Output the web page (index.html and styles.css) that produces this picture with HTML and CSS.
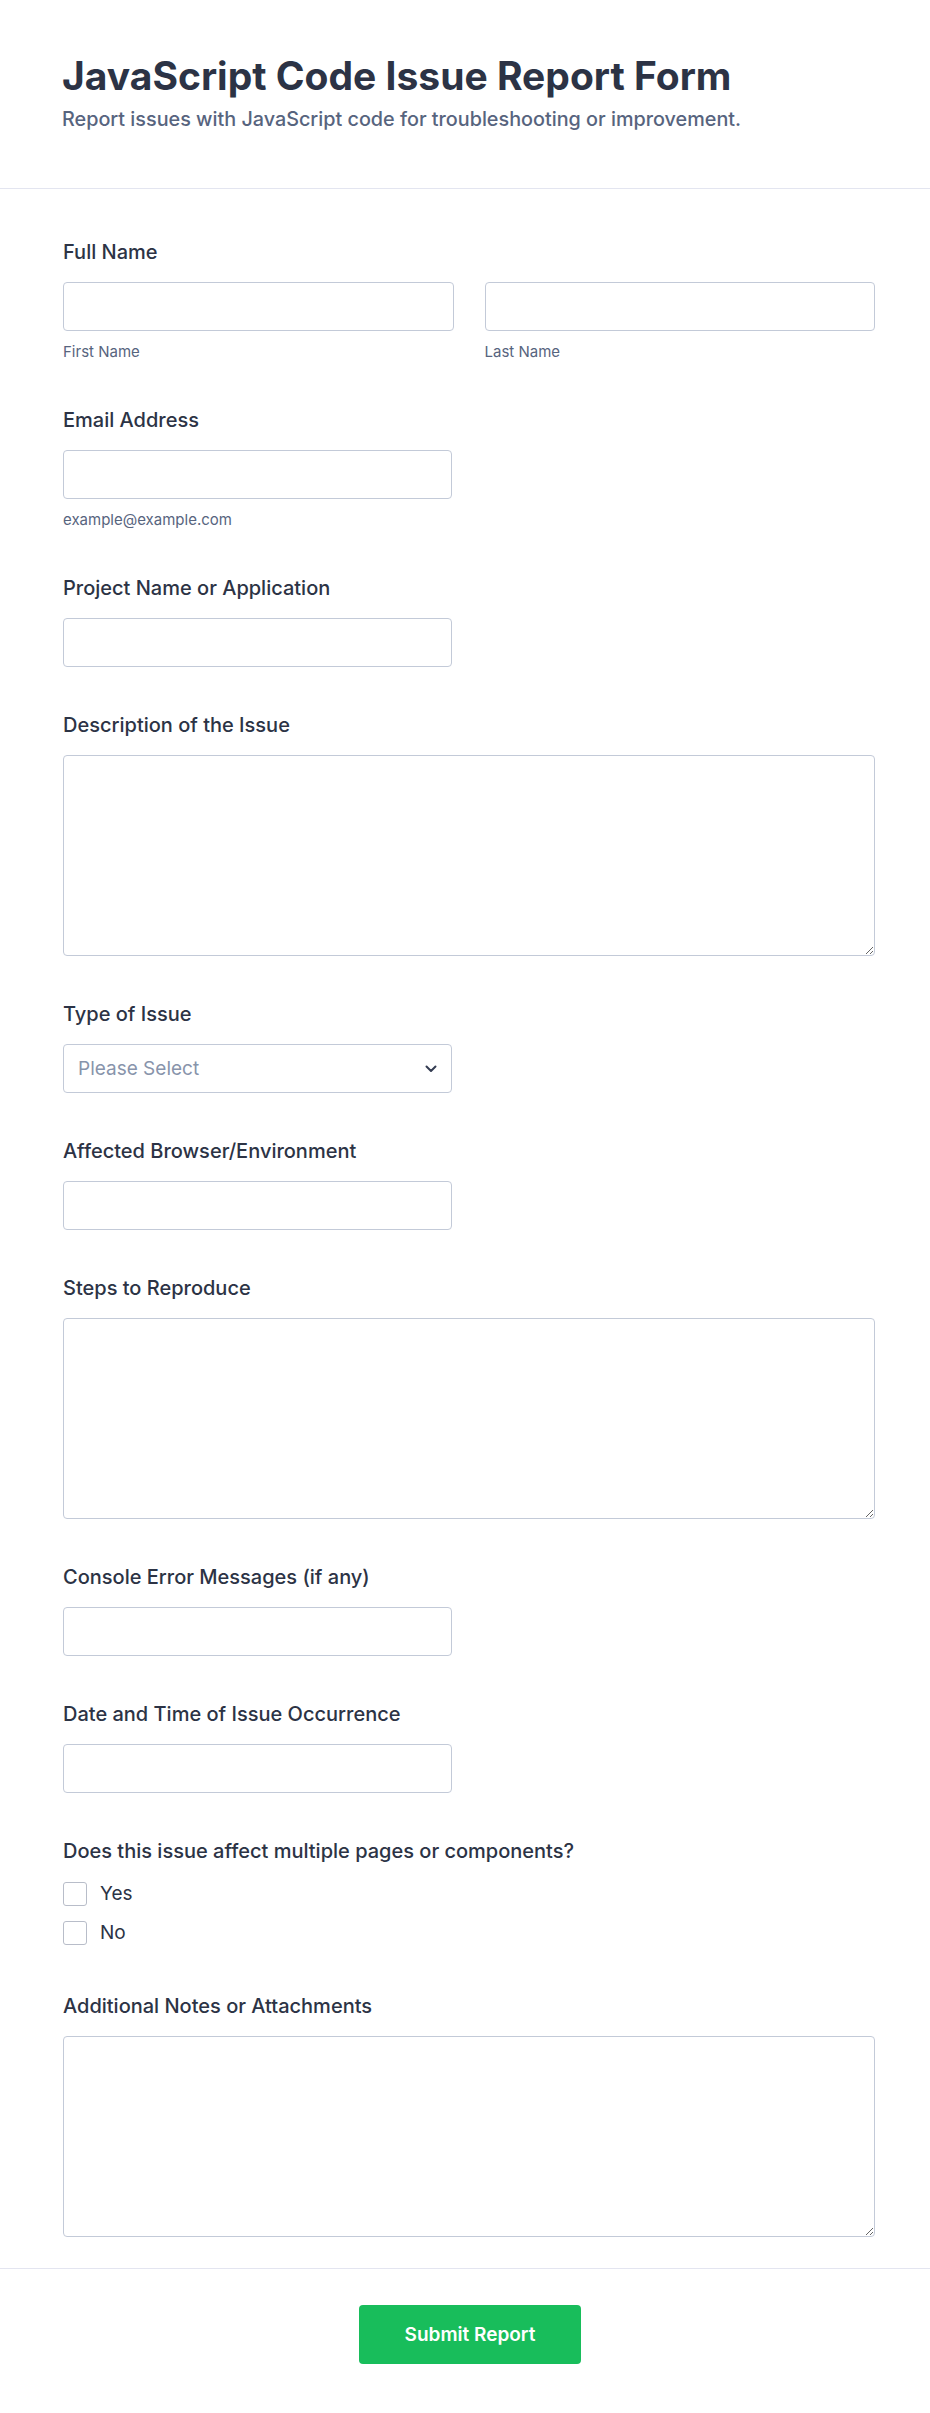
FILE: index.html
```html
<!DOCTYPE html>
<html lang="en">
<head>
    <meta charset="UTF-8">
    <meta name="viewport" content="width=device-width, initial-scale=1.0">
    <title>JavaScript Code Issue Report Form</title>
    <link rel="stylesheet" href="styles.css">
</head>
<body>
    <form class="report-form" onsubmit="return false;">
        <header class="form-header">
            <h1 class="form-title">JavaScript Code Issue Report Form</h1>
            <p class="form-subtitle">Report issues with JavaScript code for troubleshooting or improvement.</p>
        </header>

        <div class="form-body">
            <div class="field">
                <label class="field-label">Full Name</label>
                <div class="name-row">
                    <div>
                        <input type="text" class="text-input" id="first_name">
                        <span class="sublabel">First Name</span>
                    </div>
                    <div>
                        <input type="text" class="text-input" id="last_name">
                        <span class="sublabel">Last Name</span>
                    </div>
                </div>
            </div>

            <div class="field">
                <label class="field-label" for="email">Email Address</label>
                <input type="email" class="text-input half" id="email">
                <span class="sublabel">example@example.com</span>
            </div>

            <div class="field">
                <label class="field-label" for="project">Project Name or Application</label>
                <input type="text" class="text-input half" id="project">
            </div>

            <div class="field">
                <label class="field-label" for="description">Description of the Issue</label>
                <textarea class="text-area" id="description"></textarea>
            </div>

            <div class="field">
                <label class="field-label" for="issue_type">Type of Issue</label>
                <div class="select-wrap half">
                    <select class="select-input" id="issue_type">
                        <option value="">Please Select</option>
                        <option>Syntax Error</option>
                        <option>Runtime Error</option>
                        <option>Logic Error</option>
                        <option>Performance</option>
                        <option>Other</option>
                    </select>
                    <svg class="select-arrow" width="12" height="8" viewBox="0 0 12 8">
                        <path d="M1.5 1.5 L6 6 L10.5 1.5" fill="none" stroke="#343c52" stroke-width="2" stroke-linecap="round" stroke-linejoin="round"/>
                    </svg>
                </div>
            </div>

            <div class="field">
                <label class="field-label" for="browser">Affected Browser/Environment</label>
                <input type="text" class="text-input half" id="browser">
            </div>

            <div class="field">
                <label class="field-label" for="steps">Steps to Reproduce</label>
                <textarea class="text-area" id="steps"></textarea>
            </div>

            <div class="field">
                <label class="field-label" for="console">Console Error Messages (if any)</label>
                <input type="text" class="text-input half" id="console">
            </div>

            <div class="field">
                <label class="field-label" for="occurred">Date and Time of Issue Occurrence</label>
                <input type="text" class="text-input half" id="occurred">
            </div>

            <div class="field field-checks">
                <label class="field-label">Does this issue affect multiple pages or components?</label>
                <div class="check-list">
                    <label class="check-row">
                        <input type="checkbox" class="check-box" name="multiple" value="Yes">
                        <span>Yes</span>
                    </label>
                    <label class="check-row">
                        <input type="checkbox" class="check-box" name="multiple" value="No">
                        <span>No</span>
                    </label>
                </div>
            </div>

            <div class="field">
                <label class="field-label" for="notes">Additional Notes or Attachments</label>
                <textarea class="text-area" id="notes"></textarea>
            </div>
        </div>

        <div class="form-footer">
            <button type="submit" class="submit-btn">Submit Report</button>
        </div>
    </form>
</body>
</html>
```

FILE: styles.css
```css
* {
    margin: 0;
    padding: 0;
    box-sizing: border-box;
    font-family: 'Inter', 'Noto Sans', sans-serif;
}

body {
    background-color: #ffffff;
    color: #2c3345;
}

.report-form {
    width: 100%;
}

.form-header {
    padding: 53px 56px 54px 62px;
    border-bottom: 1px solid #e3e5f0;
}

.form-title {
    font-size: 39px;
    font-weight: 700;
    line-height: 1.2;
    color: #2c3345;
}

.form-subtitle {
    margin-top: 6px;
    font-size: 19.8px;
    font-weight: 500;
    line-height: 1.4;
    color: #57647e;
}

.form-body {
    padding: 50px 55px 31px 63px;
    border-bottom: 1px solid #e3e5f0;
}

.field {
    margin-bottom: 45px;
}

.field:last-child {
    margin-bottom: 0;
}

.field-label {
    display: block;
    font-size: 20px;
    font-weight: 500;
    line-height: 27px;
    color: #2c3345;
    margin-bottom: 16px;
}

.name-row {
    display: grid;
    grid-template-columns: 1fr 1fr;
    gap: 31px;
}

.text-input,
.select-input {
    display: block;
    width: 100%;
    height: 49px;
    border: 1px solid #c3cad8;
    border-radius: 4px;
    background-color: #ffffff;
    font-size: 19px;
    color: #2c3345;
    padding: 0 14px;
    outline: none;
}

.half {
    width: 389px;
}

.sublabel {
    display: block;
    margin-top: 11px;
    font-size: 15px;
    line-height: 20px;
    color: #57647e;
}

.text-area {
    display: block;
    width: 100%;
    height: 201px;
    border: 1px solid #c3cad8;
    border-radius: 4px;
    padding: 10px 14px;
    font-size: 19px;
    color: #2c3345;
    outline: none;
    resize: vertical;
}

.select-wrap {
    position: relative;
}

.select-input {
    appearance: none;
    -webkit-appearance: none;
    color: #8894ab;
    font-size: 19px;
    cursor: pointer;
}

.select-arrow {
    position: absolute;
    right: 15px;
    top: 21px;
    pointer-events: none;
}

.field-checks {
    margin-bottom: 48px;
}

.field-checks .field-label {
    margin-bottom: 17px;
}

.check-list {
    display: flex;
    flex-direction: column;
    gap: 15px;
}

.check-row {
    display: flex;
    align-items: center;
    gap: 13px;
    height: 24px;
    font-size: 19px;
    color: #2c3345;
    cursor: pointer;
}

.check-box {
    appearance: none;
    -webkit-appearance: none;
    width: 24px;
    height: 24px;
    border: 1px solid #b8bdc9;
    border-radius: 3px;
    background-color: #ffffff;
    cursor: pointer;
}

.check-box:checked {
    background-color: #18bd5b;
    border-color: #18bd5b;
}

.form-footer {
    display: flex;
    justify-content: center;
    padding: 36px 0 50px 10px;
}

.submit-btn {
    width: 222px;
    height: 59px;
    border: none;
    border-radius: 4px;
    background-color: #18bd5b;
    color: #ffffff;
    font-size: 19px;
    font-weight: 600;
    cursor: pointer;
}

.submit-btn:hover {
    background-color: #16aa52;
}
```
